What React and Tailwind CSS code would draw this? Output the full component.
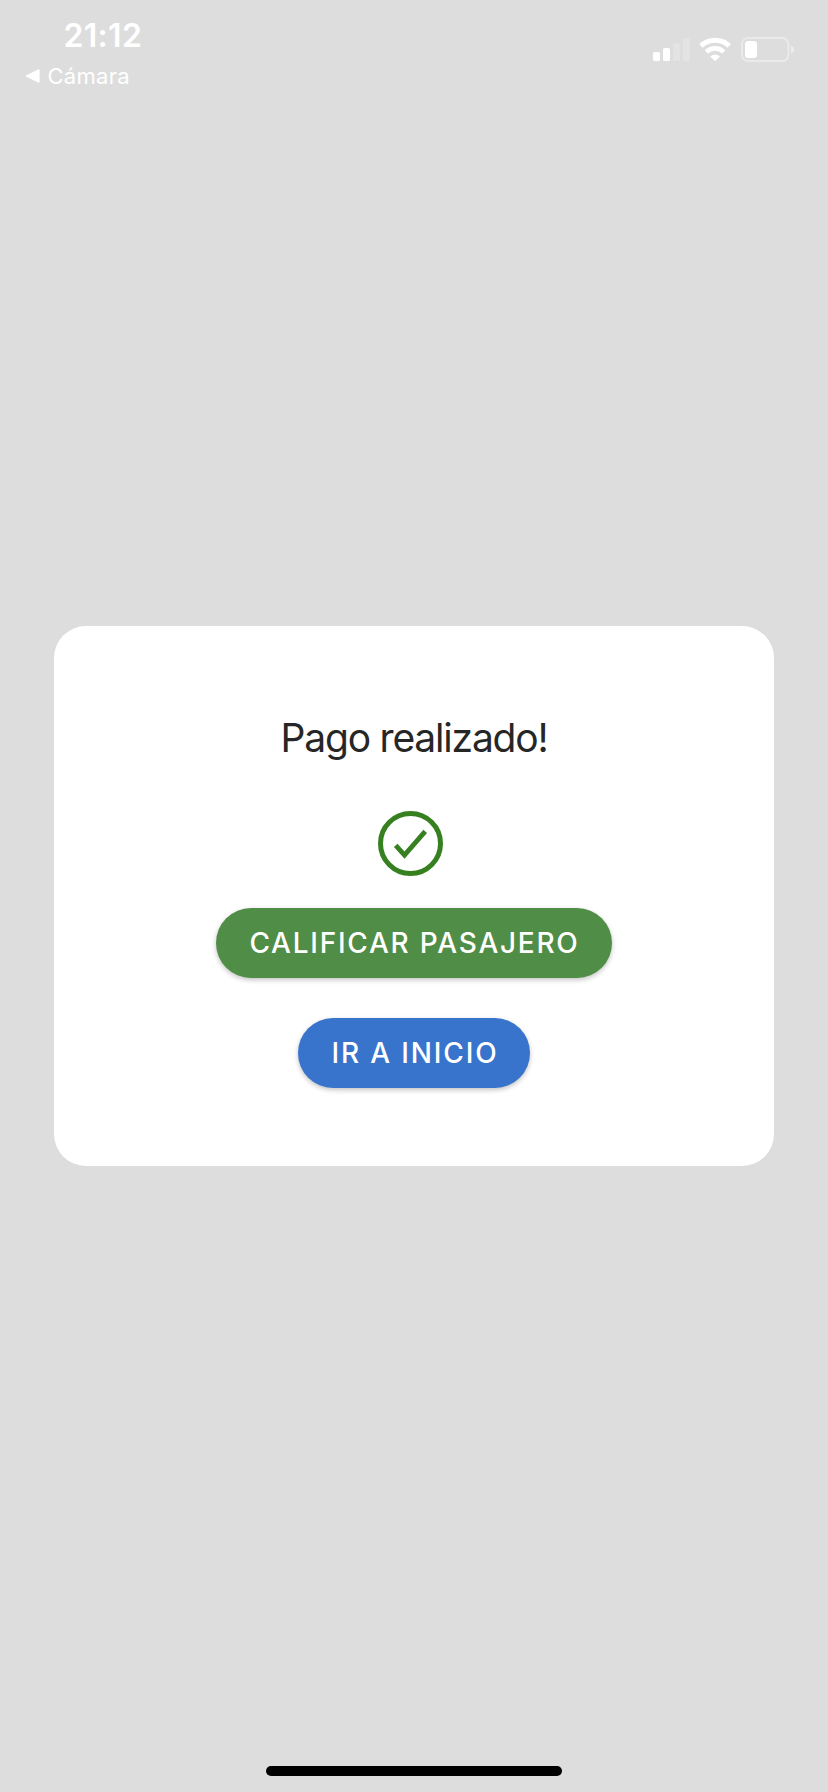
import React from "react";

function SignalIcon() {
  return (
    <svg width="38" height="24" viewBox="0 0 38 24" fill="#fff">
      <rect x="0" y="14" width="7" height="9" rx="1.6" />
      <rect x="10" y="10" width="7" height="13" rx="1.6" />
      <rect x="20" y="5" width="7" height="18" rx="1.6" opacity="0.18" />
      <rect x="30" y="0" width="7" height="23" rx="1.6" opacity="0.18" />
    </svg>
  );
}

function WifiIcon() {
  return (
    <svg width="33" height="25" viewBox="0 0 33 25" fill="none" stroke="#fff">
      <path d="M1.9 8.9 A20.8 20.8 0 0 1 30.3 8.9" strokeWidth="5" />
      <path d="M7.4 14.9 A12.4 12.4 0 0 1 24.8 14.9" strokeWidth="4.8" />
      <path d="M16.1 24.2 L11.2 19.4 A7 7 0 0 1 21 19.4 Z" fill="#fff" stroke="none" />
    </svg>
  );
}

function BatteryIcon() {
  return (
    <svg width="54" height="26" viewBox="0 0 54 26" fill="none">
      <rect x="1" y="1" width="46.4" height="23" rx="6" stroke="#fff" strokeOpacity="0.38" strokeWidth="2" />
      <rect x="4" y="4" width="12" height="17" rx="3" fill="#fff" />
      <path d="M50 8.4 C52 9 53.2 10.6 53.2 12.5 C53.2 14.4 52 16 50 16.6 Z" fill="#fff" fillOpacity="0.45" />
    </svg>
  );
}

function StatusBar() {
  return (
    <header className="flex h-[100px] justify-between pl-[25px] pr-[33px] text-white">
      <div className="flex flex-col pt-4">
        <div className="pl-[38.5px] text-[32px] font-semibold leading-10 tracking-[0.3px]">21:12</div>
        <div className="flex items-center pt-1">
          <svg width="15" height="16" viewBox="0 0 15 16" fill="#fff">
            <path d="M1.4 7.2 L13 1.4 Q14.6 .8 14.6 2.5 V13.5 Q14.6 15.2 13 14.6 L1.4 8.8 Q0 8 1.4 7.2Z" />
          </svg>
          <span className="pl-[7.5px] text-[22px] leading-8 tracking-[0.3px]">Cámara</span>
        </div>
      </div>
      <div className="flex items-start pt-[37px]">
        <div className="mr-2 pt-px"><SignalIcon /></div>
        <div className="mr-[9px]"><WifiIcon /></div>
        <BatteryIcon />
      </div>
    </header>
  );
}

export default function App() {
  return (
    <div className="flex h-[1792px] w-[828px] flex-col overflow-hidden bg-[#dddddd] font-[Inter,'Liberation_Sans',sans-serif]">
      <StatusBar />
      <main className="mx-[54px] mt-[526px] flex h-[540px] flex-col items-center rounded-[32px] bg-white">
        <h1 className="mt-[88px] whitespace-nowrap text-[39px] leading-[48px] tracking-[-1.2px] text-[#262626]">
          Pago realizado!
        </h1>
        <svg className="mr-[7px] mt-[49px]" width="65" height="65" viewBox="0 0 65 65" fill="none" stroke="#36801f" strokeWidth="5">
          <circle cx="32.5" cy="32.5" r="30" />
          <path d="M17.7 34.4 L26.5 44.2 L47.2 20.4" strokeWidth="4.8" />
        </svg>
        <button className="mt-8 flex h-[70px] w-[396px] items-center justify-center whitespace-nowrap rounded-full bg-[#508d46] pl-px text-[28px] font-medium tracking-[1.75px] text-white shadow-[0_2px_5px_rgba(0,0,0,0.24)]">
          CALIFICAR PASAJERO
        </button>
        <button className="mt-10 flex h-[70px] w-[232px] items-center justify-center whitespace-nowrap rounded-full bg-[#3873cc] pl-[2px] text-[28px] font-medium tracking-[1.85px] text-white shadow-[0_2px_5px_rgba(0,0,0,0.24)]">
          IR A INICIO
        </button>
      </main>
      <div className="mx-auto mb-4 mt-auto h-[10px] w-[296px] rounded-full bg-black" />
    </div>
  );
}
